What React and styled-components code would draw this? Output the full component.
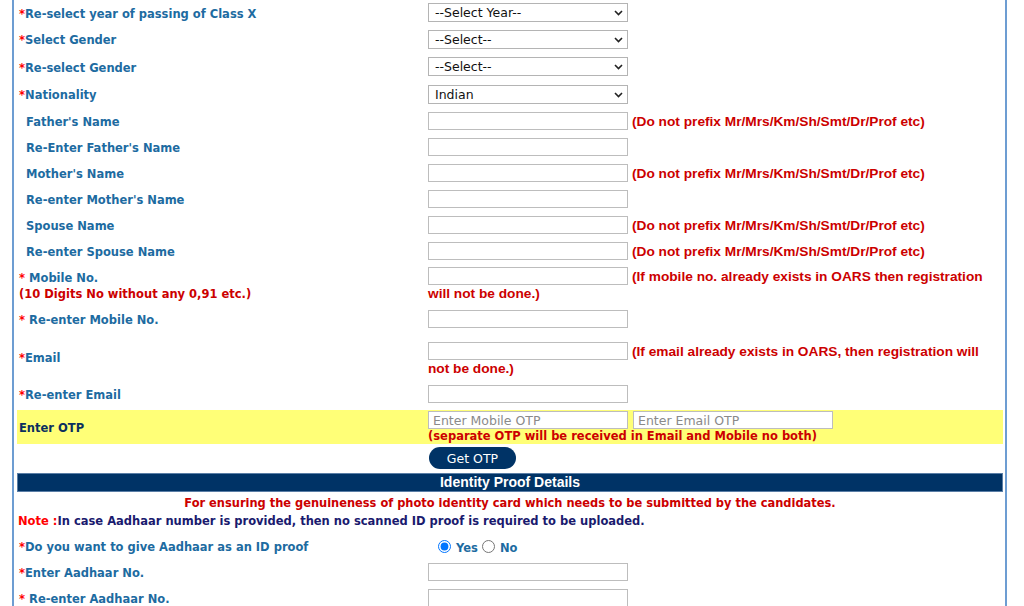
import React from 'react';
import styled, { createGlobalStyle } from 'styled-components';

const GlobalStyle = createGlobalStyle`
  html, body {
    margin: 0;
    padding: 0;
    background: #ffffff;
  }
  body {
    font-family: "DejaVu Sans", Verdana, sans-serif;
  }
`;

const Page = styled.div`
  width: 1024px;
  height: 606px;
  overflow: hidden;
  background: #ffffff;
`;

const Frame = styled.div`
  margin-left: 12px;
  width: 986px;
  border-left: 2px solid #6d9dd2;
  border-right: 2px solid #6d9dd2;
  padding: 0 2px 0 3px;
  min-height: 640px;
`;

const Row = styled.div`
  display: grid;
  grid-template-columns: 410px 1fr;
  column-gap: 1px;
  align-items: center;
  min-height: ${p => p.$h}px;
  margin-top: ${p => p.$mt || 0}px;
  background: ${p => p.$bg || 'transparent'};
`;

const Label = styled.div`
  padding: 2px 0 0 2px;
  font-size: 11.5px;
  font-weight: bold;
  line-height: 16px;
  color: ${p => p.$dark ? '#0b2f5e' : '#1d6ba1'};
`;

const Indent = styled.span`
  display: inline-block;
  width: 7px;
`;

const Star = styled.span`
  color: #ff0000;
`;

const Hint = styled.span`
  display: block;
  color: #cc0000;
`;

const Field = styled.div`
  padding-top: ${p => p.$pt || 0}px;
  font-family: "Liberation Sans", Arial, sans-serif;
  font-size: 13.7px;
  font-weight: bold;
  line-height: 16px;
  color: #cc0000;
`;

const Note = styled.span`
  margin-left: 4px;
  vertical-align: -1px;
`;

const SelectWrap = styled.span`
  position: relative;
  display: inline-block;
  vertical-align: middle;
  width: 200px;
  height: 19px;
`;

const Select = styled.select`
  appearance: none;
  width: 200px;
  height: 19px;
  margin: 0;
  padding: 0 0 0 6px;
  border: 1px solid #b4b4b4;
  border-radius: 0;
  background: #ffffff;
  font-family: "DejaVu Sans", Verdana, sans-serif;
  font-size: 12.5px;
  color: #111111;
  box-sizing: border-box;
`;

const Chevron = styled.svg`
  position: absolute;
  right: 5px;
  top: 7px;
  pointer-events: none;
`;

const TextBox = styled.input`
  display: inline-block;
  vertical-align: middle;
  width: 200px;
  height: 18px;
  margin: 0;
  padding: 0 4px;
  border: 1px solid #bdbdbd;
  background: #ffffff;
  font-family: "DejaVu Sans", Verdana, sans-serif;
  font-size: 12.5px;
  box-sizing: border-box;
  &::placeholder {
    color: #8a8a8a;
  }
`;

const OtpBoxes = styled.div`
  display: flex;
  gap: 5px;
  padding-top: 1px;
`;

const OtpHint = styled.div`
  font-size: 11.5px;
  font-weight: bold;
  line-height: 15px;
  color: #cc0000;
`;

const Button = styled.button`
  margin-left: 1px;
  width: 87px;
  height: 22px;
  border: none;
  border-radius: 11px;
  background: #003366;
  color: #ffffff;
  font-family: "DejaVu Sans", Verdana, sans-serif;
  font-size: 12.5px;
  padding: 0;
`;

const Banner = styled.div`
  margin-top: 1px;
  height: 19px;
  background: #003366;
  border: 1px solid #5a7ea6;
  box-sizing: border-box;
  color: #ffffff;
  text-align: center;
  font-family: "Liberation Sans", Arial, sans-serif;
  font-size: 14px;
  font-weight: bold;
  line-height: 17px;
`;

const Center = styled.div`
  padding-top: 1px;
  text-align: center;
  font-family: "DejaVu Sans Condensed", "DejaVu Sans", sans-serif;
  font-size: 12.7px;
  font-weight: bold;
  line-height: 20px;
  color: #cc0000;
`;

const NoteLine = styled.div`
  padding-left: 1px;
  font-size: 11.5px;
  font-weight: bold;
  line-height: 17px;
  color: #1a1a6e;
`;

const NoteTag = styled.span`
  color: #ff0000;
`;

const Radios = styled.div`
  display: flex;
  align-items: center;
  padding-left: 8px;
  font-size: 11.5px;
  font-weight: bold;
  color: #1d6ba1;
`;

const RadioLabel = styled.label`
  display: flex;
  align-items: center;
  margin-right: 2px;
  input {
    margin: 0 5px 0 2px;
    width: 13px;
    height: 13px;
  }
  span {
    padding-top: 4px;
  }
`;

const ChevronIcon = () => (
  <Chevron width="9" height="6" viewBox="0 0 9 6">
    <path d="M1 1l3.5 3.5L8 1" fill="none" stroke="#222" strokeWidth="1.6" />
  </Chevron>
);

const Dropdown = ({ value }) => (
  <SelectWrap>
    <Select defaultValue={value}>
      <option>{value}</option>
    </Select>
    <ChevronIcon />
  </SelectWrap>
);

const prefixNote = '(Do not prefix Mr/Mrs/Km/Sh/Smt/Dr/Prof etc)';

const topRows = [
  { label: 'Re-select year of passing of Class X', star: true, select: '--Select Year--', h: 25 },
  { label: 'Select Gender', star: true, select: '--Select--', h: 28 },
  { label: 'Re-select Gender', star: true, select: '--Select--', h: 27 },
  { label: 'Nationality', star: true, select: 'Indian', h: 28 },
  { label: "Father's Name", note: prefixNote, h: 26 },
  { label: "Re-Enter Father's Name", h: 26 },
  { label: "Mother's Name", note: prefixNote, h: 26 },
  { label: "Re-enter Mother's Name", h: 26 },
  { label: 'Spouse Name', note: prefixNote, h: 26 },
  { label: 'Re-enter Spouse Name', note: prefixNote, h: 26 },
];

const LabelText = ({ star, spaced, children }) => (
  <>
    {star ? <Star>*</Star> : <Indent />}
    {spaced ? ' ' : ''}
    {children}
  </>
);

export default function App() {
  return (
    <Page>
      <GlobalStyle />
      <Frame>
        {topRows.map(r => (
          <Row key={r.label} $h={r.h}>
            <Label>
              <LabelText star={r.star}>{r.label}</LabelText>
            </Label>
            <Field>
              {r.select ? <Dropdown value={r.select} /> : <TextBox />}
              {r.note && <Note>{r.note}</Note>}
            </Field>
          </Row>
        ))}

        <Row $h={41}>
          <Label>
            <LabelText star spaced>Mobile No.</LabelText>
            <Hint>(10 Digits No without any 0,91 etc.)</Hint>
          </Label>
          <Field>
            <TextBox />
            <Note>(If mobile no. already exists in OARS then registration will not be done.)</Note>
          </Field>
        </Row>

        <Row $h={28}>
          <Label>
            <LabelText star spaced>Re-enter Mobile No.</LabelText>
          </Label>
          <Field>
            <TextBox />
          </Field>
        </Row>

        <Row $h={47}>
          <Label>
            <LabelText star>Email</LabelText>
          </Label>
          <Field $pt={6}>
            <TextBox />
            <Note>(If email already exists in OARS, then registration will not be done.)</Note>
          </Field>
        </Row>

        <Row $h={28}>
          <Label>
            <LabelText star>Re-enter Email</LabelText>
          </Label>
          <Field>
            <TextBox />
          </Field>
        </Row>

        <Row $h={33} $mt={2} $bg="#ffff77">
          <Label $dark>Enter OTP</Label>
          <div>
            <OtpBoxes>
              <TextBox placeholder="Enter Mobile OTP" />
              <TextBox placeholder="Enter Email OTP" />
            </OtpBoxes>
            <OtpHint>(separate OTP will be received in Email and Mobile no both)</OtpHint>
          </div>
        </Row>

        <Row $h={28}>
          <div />
          <div>
            <Button>Get OTP</Button>
          </div>
        </Row>

        <Banner>Identity Proof Details</Banner>

        <Center>For ensuring the genuineness of photo identity card which needs to be submitted by the candidates.</Center>

        <NoteLine>
          <NoteTag>Note :</NoteTag>In case Aadhaar number is provided, then no scanned ID proof is required to be uploaded.
        </NoteLine>

        <Row $h={26} $mt={3}>
          <Label>
            <LabelText star>Do you want to give Aadhaar as an ID proof</LabelText>
          </Label>
          <Radios>
            <RadioLabel>
              <input type="radio" name="aadhaar" defaultChecked />
              <span>Yes</span>
            </RadioLabel>
            <RadioLabel>
              <input type="radio" name="aadhaar" />
              <span>No</span>
            </RadioLabel>
          </Radios>
        </Row>

        <Row $h={26}>
          <Label>
            <LabelText star>Enter Aadhaar No.</LabelText>
          </Label>
          <Field>
            <TextBox />
          </Field>
        </Row>

        <Row $h={26}>
          <Label>
            <LabelText star spaced>Re-enter Aadhaar No.</LabelText>
          </Label>
          <Field>
            <TextBox />
          </Field>
        </Row>
      </Frame>
    </Page>
  );
}
